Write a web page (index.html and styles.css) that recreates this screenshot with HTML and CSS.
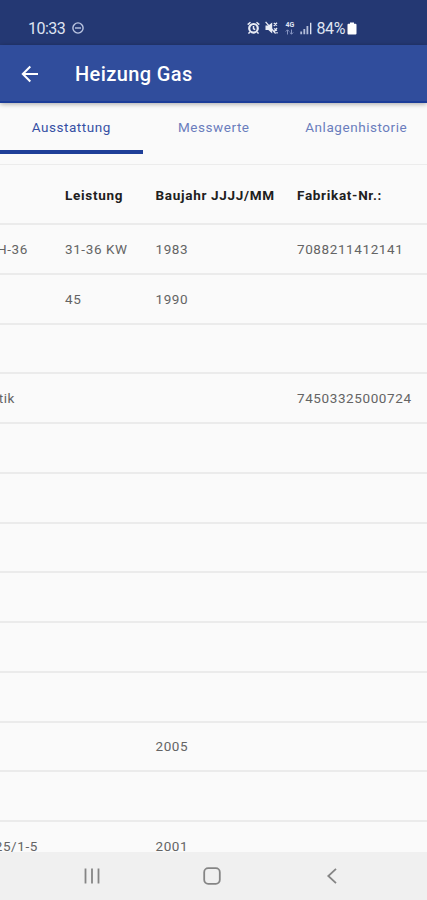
FILE: index.html
```html
<!DOCTYPE html>
<html lang="de">
<head>
    <meta charset="utf-8">
    <title>Heizung Gas</title>
    <link rel="stylesheet" href="styles.css">
</head>

<body>
    <div class="status-bar">
        <span class="time">10:33</span>
        <svg class="dnd" width="12" height="12" viewBox="0 0 12 12">
            <circle cx="6" cy="6" r="5.1"/>
            <path d="M3 6h6"/>
        </svg>
        <div class="status-icons">
            <svg width="13" height="14" viewBox="0 0 13 14">
                <circle cx="6.5" cy="7.3" r="4.3" fill="none" stroke="#e8ebf5" stroke-width="2.2"/>
                <path d="M6.5 5v2.7l1.7 1M.7 3.6l2.8-2.4M12.3 3.6L9.5 1.2M2.8 11l-1.3 1.6M10.2 11l1.3 1.6" fill="none" stroke="#e8ebf5" stroke-width="1.5"/>
            </svg>
            <svg width="13" height="14" viewBox="0 0 13 14">
                <path d="M.5 4.5h2.8L7.2 1.5v11L3.3 9H.5z" fill="#e8ebf5"/>
                <path d="M.6.9l10 11.6M8.8 2l3.2 2.5M12 1.8L8.8 5M9 7.5l3 2M12 7l-3 4M12 11v1.5" fill="none" stroke="#e8ebf5" stroke-width="1.3"/>
            </svg>
            <div class="network">
                <span>4G</span>
                <svg width="9" height="6" viewBox="0 0 9 6">
                    <path d="M2.5 5.5V1M.8 2.5L2.5.8l1.7 1.7M6.5.5V5M4.8 3.5l1.7 1.7 1.7-1.7" fill="none" stroke="#8795c2" stroke-width="1"/>
                </svg>
            </div>
            <svg class="signal" width="12" height="13" viewBox="0 0 12 13">
                <path d="M1.2 12.3V9.5M4.3 12.3V7M7.4 12.3V4" stroke="#b3bdda" stroke-width="1.8"/>
                <path d="M10.7 12.3V.8" stroke="#e8ebf5" stroke-width="1.3"/>
            </svg>
            <span class="percent">84%</span>
            <svg width="10" height="13" viewBox="0 0 10 13">
                <path d="M3 .5h4v1.3h1.5q1 0 1 1v8.7q0 1-1 1h-7q-1 0-1-1V2.8q0-1 1-1H3z" fill="#fff"/>
            </svg>
        </div>
    </div>

    <header class="app-bar">
        <svg class="back" width="18" height="18" viewBox="0 0 18 18">
            <path d="M17 9H2M9.3 1.5L1.8 9l7.5 7.5"/>
        </svg>
        <h1>Heizung Gas</h1>
    </header>

    <nav class="tabs">
        <div class="tab active">Ausstattung</div>
        <div class="tab">Messwerte</div>
        <div class="tab">Anlagenhistorie</div>
    </nav>

    <main class="table">
        <div class="row head"><span></span><span>Leistung</span><span>Baujahr JJJJ/MM</span><span>Fabrikat-Nr.:</span></div>
        <div class="row"><span class="cut cut-model">H-36</span><span>31-36 KW</span><span>1983</span><span>7088211412141</span></div>
        <div class="row"><span></span><span>45</span><span>1990</span><span></span></div>
        <div class="row"></div>
        <div class="row"><span class="cut cut-short">tik</span><span></span><span></span><span>74503325000724</span></div>
        <div class="row"></div>
        <div class="row"></div>
        <div class="row"></div>
        <div class="row"></div>
        <div class="row"></div>
        <div class="row"></div>
        <div class="row"><span></span><span></span><span>2005</span><span></span></div>
        <div class="row"></div>
        <div class="row"><span class="cut cut-long">25/1-5</span><span></span><span>2001</span><span></span></div>
    </main>

    <footer class="nav-bar">
        <svg width="18" height="18" viewBox="0 0 18 18">
            <path d="M2.5 1.5v15M9 1.5v15M15.5 1.5v15"/>
        </svg>
        <svg width="18" height="18" viewBox="0 0 18 18">
            <rect x="1.2" y="1.2" width="15.6" height="15.6" rx="4"/>
        </svg>
        <svg width="18" height="18" viewBox="0 0 18 18">
            <path d="M13 1.8L5.3 9l7.7 7.2"/>
        </svg>
    </footer>
</body>
</html>
```

FILE: styles.css
```css
* {
    box-sizing: border-box;
}
body {
    margin: 0;
    height: 900px;
    display: flex;
    flex-direction: column;
    overflow: hidden;
    background: #fafafa;
    font-family: Roboto, "Liberation Sans", sans-serif;
}
.status-bar {
    flex: none;
    height: 45px;
    padding: 11px 70px 0 28px;
    display: flex;
    align-items: center;
    background: #243873;
    color: #dfe4f2;
}
.time {
    font-size: 16px;
    letter-spacing: -0.5px;
}
.dnd {
    margin-left: 7px;
    fill: none;
    stroke: #bcc6e2;
    stroke-width: 1.4;
}
.status-icons {
    margin-left: auto;
    display: flex;
    align-items: center;
}
.status-icons svg {
    display: block;
    flex: none;
}
.status-icons > svg + svg {
    margin-left: 5px;
}
.network {
    width: 10px;
    margin: 0 5px 0 7px;
    font-size: 7px;
    font-weight: bold;
    line-height: 7px;
}
.percent {
    margin: 0 2px 0 4px;
    font-size: 16px;
    letter-spacing: -0.4px;
}
.app-bar {
    flex: none;
    height: 58px;
    padding: 2px 0 0 21px;
    display: flex;
    align-items: center;
    background: #304d9c;
    border-bottom: 2px solid #1b3c98;
    box-shadow: 0 1px 5px rgba(0, 0, 0, 0.35);
    z-index: 1;
}
.back {
    fill: none;
    stroke: #fff;
    stroke-width: 2;
}
h1 {
    margin: 0 0 0 36px;
    font-size: 20px;
    font-weight: 500;
    letter-spacing: 0.4px;
    color: #fff;
}
.tabs {
    flex: none;
    height: 62px;
    display: flex;
    border-bottom: 1px solid #ececec;
}
.tab {
    width: 142.5px;
    height: 51px;
    padding-top: 15px;
    flex: none;
    text-align: center;
    font-size: 13.5px;
    line-height: 18px;
    letter-spacing: 0.55px;
    color: #6a7dbd;
}
.tab.active {
    color: #3650a4;
    border-bottom: 4px solid #1f3f98;
}
.table {
    flex: 1;
    overflow: hidden;
}
.row {
    height: 49.75px;
    display: grid;
    grid-template-columns: 65px 90.5px 141.5px 130px;
    align-items: center;
    border-bottom: 2px solid #ebebeb;
    font-size: 13.5px;
    line-height: 16px;
    letter-spacing: 0.6px;
    color: #646464;
    white-space: nowrap;
}
.head {
    height: 60px;
    padding-top: 2px;
    font-weight: bold;
    letter-spacing: 0.7px;
    color: #202020;
}
/* first column is scrolled out of view, only the end of its text shows */
.cut {
    display: flex;
    justify-content: flex-end;
}
.cut-model {
    width: 28px;
}
.cut-short {
    width: 15px;
}
.cut-long {
    width: 38px;
}
.nav-bar {
    flex: none;
    height: 48px;
    padding: 0 86px 0 83px;
    display: flex;
    justify-content: space-between;
    align-items: center;
    background: #f0f0f0;
}
.nav-bar svg {
    fill: none;
    stroke: #858585;
    stroke-width: 1.8;
}
```
